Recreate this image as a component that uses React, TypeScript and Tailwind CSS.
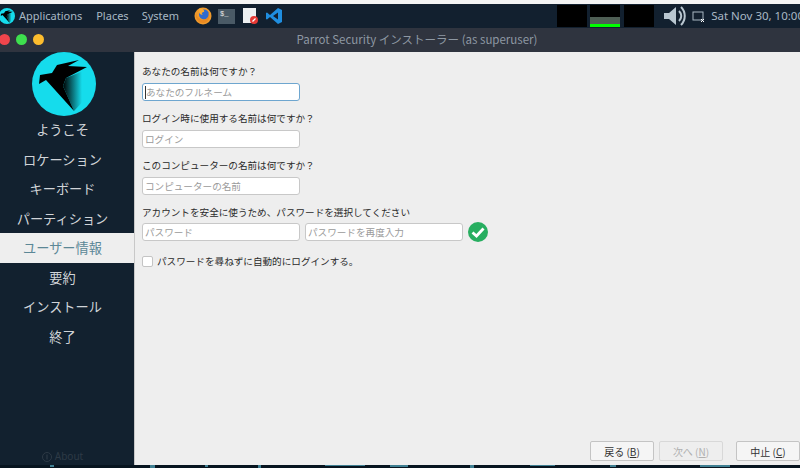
const JP = "font-['Noto_Sans_CJK_JP','Noto_Sans',sans-serif]"

const steps = ['ようこそ', 'ロケーション', 'キーボード', 'パーティション', 'ユーザー情報', '要約', 'インストール', '終了']

function ParrotLogo({ size, id }: { size: number; id: string }) {
  return (
    <svg width={size} height={size} viewBox="0 0 64 64" className="shrink-0">
      <defs>
        <linearGradient id={id} gradientUnits="userSpaceOnUse" x1="31" y1="36" x2="50" y2="36">
          <stop offset="0" stopColor="#000" />
          <stop offset="1" stopColor="#15dcec" />
        </linearGradient>
      </defs>
      <circle cx="32" cy="32" r="32" fill="#15dcec" />
      <path d="M34 26 L56 17 L56 44 L42 59 L31 34 Z" fill={`url(#${id})`} />
      <path d="M7 32 L8 23 L20 21 L25 13 L47 8 L36 14 L55 15 L34 26 L31 34 L42 59 L14 28 Z" fill="#000" />
    </svg>
  )
}

function Firefox() {
  return (
    <svg width="18" height="18" viewBox="0 0 18 18">
      <circle cx="9" cy="9" r="8.5" fill="#ef9a2c" />
      <circle cx="10" cy="7.5" r="5" fill="#2f6bd0" />
      <path d="M2 6 C3 12 8 14 12 12 C15 10 15 7 14 5 C17 9 15 16 9 16 C4 16 1 11 2 6 Z" fill="#e98a22" />
      <path d="M5 2 C8 1 11 3 10 5 C8 5 7 7 9 8 C6 8 4 5 5 2 Z" fill="#f5a933" />
    </svg>
  )
}

function Terminal() {
  return (
    <div className="flex h-[15px] w-[17px] items-start bg-[#4a5a66] pl-[2px] pt-[1px] font-['Liberation_Mono',monospace] text-[7px] leading-[8px] text-[#e6e6e6]">
      $_
    </div>
  )
}

function DocIcon() {
  return (
    <svg width="16" height="18" viewBox="0 0 16 18">
      <rect x="0" y="1" width="13" height="15" fill="#eceff1" />
      <circle cx="11" cy="13" r="4" fill="#e53935" />
      <path d="M9.5 14.5 L12.5 11.5" stroke="#fff" strokeWidth="1.2" />
    </svg>
  )
}

function VsCode() {
  return (
    <svg width="18" height="18" viewBox="0 0 18 18">
      <path d="M13 1 L17 3 V15 L13 17 L5 10 L2 12.5 L1 12 V6 L2 5.5 L5 8 Z M13 5.5 L8 9 L13 12.5 Z" fill="#1f8ee0" fillRule="evenodd" />
    </svg>
  )
}

function Monitor({ children }: { children?: React.ReactNode }) {
  return <div className="flex h-[22px] w-[30px] flex-col justify-end bg-black">{children}</div>
}

function TextField({ placeholder, focused }: { placeholder: string; focused?: boolean }) {
  return (
    <div
      className={`flex h-[18px] w-[158px] items-center rounded-[3px] border bg-white pl-[2px] text-[9.6px] text-[#9a9a9a] ${
        focused ? 'border-[#6ea6cf]' : 'border-[#c8c8c8]'
      }`}
    >
      {focused && <span className="h-[13px] w-px bg-[#333]" />}
      <span>{placeholder}</span>
    </div>
  )
}

function Field({ label, placeholder, focused }: { label: string; placeholder: string; focused?: boolean }) {
  return (
    <div className="flex flex-col gap-[3px]">
      <label className="h-[16px] text-[9.6px] leading-[14px] text-[#2a2a2a]">{label}</label>
      <TextField placeholder={placeholder} focused={focused} />
    </div>
  )
}

function ActionButton({ label, keyName, disabled }: { label: string; keyName: string; disabled?: boolean }) {
  return (
    <button
      className={`flex h-[20px] w-[64px] items-center justify-center rounded-[2px] border text-[10px] ${
        disabled ? 'border-[#d8d8d8] bg-[#eeeeee] text-[#b0b0b0]' : 'border-[#c4c4c4] bg-[#f5f5f5] text-[#333]'
      }`}
    >
      {label} (<span className="underline">{keyName}</span>)
    </button>
  )
}

export default function App() {
  return (
    <div className={`flex h-[468px] w-[800px] flex-col overflow-hidden bg-[#f4f4f4] ${JP}`}>
      <div className="h-[4px] shrink-0 bg-[#f4f4f4]" />

      {/* top panel */}
      <div className="flex h-[24px] shrink-0 items-center bg-[#12202f] text-[11px] text-[#a9b8c4]">
        <div className="ml-[-1px] mr-[4px]">
          <ParrotLogo size={16} id="wing-small" />
        </div>
        <span className="font-['Noto_Sans',sans-serif]">Applications</span>
        <span className="ml-[14px] font-['Noto_Sans',sans-serif]">Places</span>
        <span className="ml-[13px] font-['Noto_Sans',sans-serif]">System</span>
        <div className="ml-[15px] flex items-center">
          <Firefox />
          <div className="ml-[6px]">
            <Terminal />
          </div>
          <div className="ml-[8px]">
            <DocIcon />
          </div>
          <div className="ml-[6px]">
            <VsCode />
          </div>
        </div>
        <div className="ml-auto mr-[-4px] flex items-center">
          <div className="flex gap-[3px]">
            <Monitor />
            <Monitor>
              <div className="h-[7px] bg-[#4f5f55]" />
              <div className="h-[3px] bg-[#00ff00]" />
            </Monitor>
            <div className="ml-[1px]">
              <Monitor />
            </div>
          </div>
          <svg width="26" height="24" viewBox="0 0 26 24" className="ml-[9px] text-[#b8c6d0]">
            <path d="M1 9 H6 L13 3 V21 L6 15 H1 Z" fill="currentColor" />
            <path d="M16 7 C19 10 19 14 16 17" fill="none" stroke="currentColor" strokeWidth="2" />
            <path d="M18 3 C23 8 23 16 18 21" fill="none" stroke="currentColor" strokeWidth="2" />
          </svg>
          <svg width="13" height="13" viewBox="0 0 13 13" className="ml-[3px] text-[#a9b8c4]">
            <rect x="1" y="2" width="10" height="8" fill="none" stroke="currentColor" />
            <path d="M9 9 L12 12 M12 9 L9 12" stroke="#fff" />
          </svg>
          <span className="ml-[6px] whitespace-nowrap font-['Noto_Sans',sans-serif] text-[11.5px] text-[#a9b8c4]">Sat Nov 30, 10:00</span>
        </div>
      </div>

      {/* title bar */}
      <div className="relative flex h-[24px] shrink-0 items-center justify-center bg-[#2f343f] text-[11.5px] text-[#8e98a3]">
        <div className="absolute left-[-1px] top-[6px] flex gap-[6px]">
          <span className="h-[11px] w-[11px] rounded-full bg-[#f0454c]" />
          <span className="h-[11px] w-[11px] rounded-full bg-[#3ee04e]" />
          <span className="h-[11px] w-[11px] rounded-full bg-[#fdbd2e]" />
        </div>
        <span className="ml-[34px]">Parrot Security インストーラー (as superuser)</span>
      </div>

      {/* window body */}
      <div className="flex h-[413px] shrink-0">
        <aside className="flex w-[135px] shrink-0 flex-col border-r border-[#c8c8c8] bg-[#12212f]">
          <div className="flex justify-center pr-[7px]">
            <ParrotLogo size={64} id="wing-large" />
          </div>
          <nav className="-mt-[1px] flex flex-col">
            {steps.map((step, i) => (
              <div
                key={step}
                className={`flex h-[29.5px] items-center justify-center pr-[9px] pt-[1px] text-[13.2px] ${
                  i === 4 ? 'bg-[#eeeeee] text-[#5b8796]' : 'text-[#d0d4d8]'
                }`}
              >
                {step}
              </div>
            ))}
          </nav>
          <div className="mt-auto flex items-center justify-center gap-[3px] pb-[1px] pr-[9px] font-['Noto_Sans',sans-serif] text-[10px] text-[#2d3a46]">
            <svg width="10" height="10" viewBox="0 0 10 10">
              <circle cx="5" cy="5" r="4.5" fill="none" stroke="currentColor" />
              <path d="M5 2.5 V7.5" stroke="currentColor" strokeWidth="1.2" />
            </svg>
            About
          </div>
        </aside>

        <main className="flex flex-1 flex-col bg-[#eeeeee] pl-[7px] pt-[12px]">
          <div className="flex flex-col gap-[10px]">
            <Field label="あなたの名前は何ですか？" placeholder="あなたのフルネーム" focused />
            <Field label="ログイン時に使用する名前は何ですか？" placeholder="ログイン" />
            <Field label="このコンピューターの名前は何ですか？" placeholder="コンピューターの名前" />
            <div className="-mt-[1px] flex flex-col gap-[2px]">
              <label className="h-[16px] text-[9.6px] leading-[16px] text-[#2a2a2a]">
                アカウントを安全に使うため、パスワードを選択してください
              </label>
              <div className="flex items-center gap-[5px]">
                <TextField placeholder="パスワード" />
                <TextField placeholder="パスワードを再度入力" />
                <svg width="20" height="20" viewBox="0 0 20 20">
                  <circle cx="10" cy="10" r="10" fill="#27ae60" />
                  <path d="M4.5 10.5 L8.5 14 L15.5 6.5" fill="none" stroke="#fff" strokeWidth="2.8" />
                </svg>
              </div>
            </div>
          </div>
          <div className="mt-[11px] flex items-center gap-[4px] text-[9.6px] leading-[16px] text-[#2a2a2a]">
            <span className="h-[11px] w-[11px] rounded-[2px] border border-[#c4c4c4] bg-white" />
            パスワードを尋ねずに自動的にログインする。
          </div>
          <div className="mt-auto flex justify-end pb-[4px]">
            <div className="flex gap-[5px]">
              <ActionButton label="戻る" keyName="B" />
              <ActionButton label="次へ" keyName="N" disabled />
            </div>
            <div className="ml-[13px]">
              <ActionButton label="中止" keyName="C" />
            </div>
          </div>
        </main>
      </div>

      {/* desktop wallpaper strip */}
      <svg width="800" height="3" viewBox="0 0 800 3" className="block shrink-0 bg-[#07141f]">
        <g fill="#3f7f92">
          <rect x="50" y="0" width="4" height="2" />
          <rect x="150" y="0" width="5" height="3" />
          <rect x="205" y="0" width="3" height="2" />
          <rect x="258" y="0" width="3" height="3" />
          <rect x="325" y="0" width="40" height="1" />
          <rect x="390" y="0" width="18" height="2" />
          <rect x="470" y="0" width="4" height="3" />
          <rect x="530" y="0" width="25" height="1" />
          <rect x="610" y="0" width="6" height="2" />
          <rect x="700" y="0" width="30" height="2" />
        </g>
      </svg>
    </div>
  )
}
